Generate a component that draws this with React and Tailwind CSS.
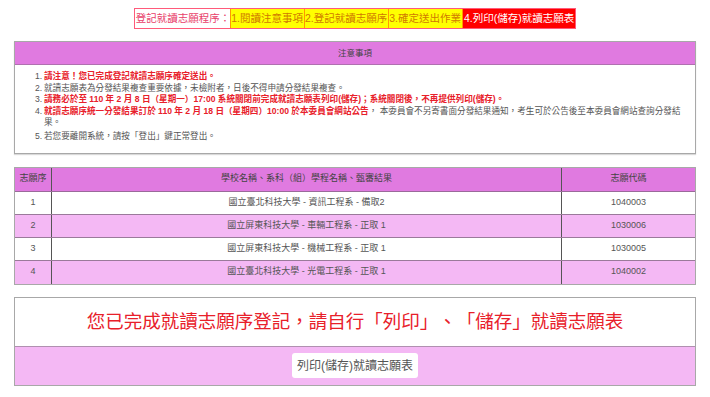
import React from "react";

const font = { fontFamily: '"Liberation Sans", "Noto Sans CJK TC", sans-serif' };

const rows = [
  ["1", "國立臺北科技大學 - 資訊工程系 - 備取2", "1040003"],
  ["2", "國立屏東科技大學 - 車輛工程系 - 正取 1", "1030006"],
  ["3", "國立屏東科技大學 - 機械工程系 - 正取 1", "1030005"],
  ["4", "國立臺北科技大學 - 光電工程系 - 正取 1", "1040002"],
];

export default function App() {
  return (
    <div lang="zh-TW" className="w-[710px] h-[397px] bg-white overflow-hidden text-[#555] [text-spacing-trim:space-all]" style={font}>
      <div className="flex justify-center pt-[8px]">
        <div className="flex border border-[#ff5a7a] text-[10.5px] leading-[19px]">
          <div className="bg-white text-[#e8406a] pl-[1px]">登記就讀志願程序：</div>
          <div className="bg-[#ffff00] text-[#d07a00] border-l border-[#ff9900] pr-[1px]">1.閱讀注意事項</div>
          <div className="bg-[#ffff00] text-[#d07a00] border-l border-[#ff9900] pr-[1px]">2.登記就讀志願序</div>
          <div className="bg-[#ffff00] text-[#d07a00] border-l border-[#ff9900] pr-[1px]">3.確定送出作業</div>
          <div className="bg-[#ff0000] text-white border-l border-[#ff9900] px-[1px]">4.列印(儲存)就讀志願表</div>
        </div>
      </div>

      <div className="mx-[14px] mt-[12px] border border-[#a8a8a8] shadow-[0_1px_1px_rgba(0,0,0,0.15)]">
        <div className="h-[23px] bg-[#e07ae0] border-b border-[#b070b0] flex items-center justify-center text-[8.5px] text-[#444]">
          注意事項
        </div>
        <div className="pl-[20px] pr-[10px] pt-[6px] pb-[10px] text-[8.6px] leading-[11.6px]">
          <div className="flex">
            <span className="w-[9px] shrink-0">1.</span>
            <span className="text-[#e8202a] font-bold">請注意！您已完成登記就讀志願序確定送出。</span>
          </div>
          <div className="flex">
            <span className="w-[9px] shrink-0">2.</span>
            <span>就讀志願表為分發結果複查重要依據，未檢附者，日後不得申請分發結果複查。</span>
          </div>
          <div className="flex">
            <span className="w-[9px] shrink-0">3.</span>
            <span className="text-[#e8202a] font-bold">請務必於至 110 年 2 月 8 日（星期一）17:00 系統關閉前完成就讀志願表列印(儲存)；系統關閉後，不再提供列印(儲存)。</span>
          </div>
          <div className="flex">
            <span className="w-[9px] shrink-0">4.</span>
            <span>
              <span className="text-[#e8202a] font-bold">就讀志願序統一分發結果訂於 110 年 2 月 18 日（星期四）10:00 於本委員會網站公告</span>
              ， 本委員會不另寄書面分發結果通知，考生可於公告後至本委員會網站查詢分發結果。
            </span>
          </div>
          <div className="flex mt-[2px]">
            <span className="w-[9px] shrink-0">5.</span>
            <span>若您要離開系統，請按「登出」鍵正常登出。</span>
          </div>
        </div>
      </div>

      <div className="mx-[14px] mt-[13px] border border-[#a8a8a8] text-[9px]">
        <div className="flex h-[24px] bg-[#e07ae0] text-[#444] border-b border-[#9a6a9a]">
          <div className="w-[37px] flex items-center justify-center border-r border-[#555]">志願序</div>
          <div className="flex-1 flex items-center justify-center border-r border-[#555]">學校名稱、系科（組）學程名稱、甄審結果</div>
          <div className="w-[133px] flex items-center justify-center">志願代碼</div>
        </div>
        {rows.map((r, i) => (
          <div
            key={r[0]}
            className={`flex h-[23px] ${i % 2 === 1 ? "bg-[#f4b8f4]" : "bg-white"} ${i < 3 ? "border-b border-[#9a7a9a]" : ""}`}
          >
            <div className="w-[37px] flex items-center justify-center border-r border-[#555]">{r[0]}</div>
            <div className="flex-1 flex items-center justify-center border-r border-[#555]">{r[1]}</div>
            <div className="w-[133px] flex items-center justify-center">{r[2]}</div>
          </div>
        ))}
      </div>

      <div className="mx-[14px] mt-[12px] border border-[#a8a8a8]">
        <div className="h-[49px] bg-white flex items-center justify-center text-[18.5px] text-[#e8202a] border-b border-[#b090b0]">
          您已完成就讀志願序登記，請自行「列印」、「儲存」就讀志願表
        </div>
        <div className="h-[38px] bg-[#f4b8f4] flex items-center justify-center">
          <button className="h-[25px] w-[126px] bg-white rounded-[3px] text-[12px] text-[#555]">
            列印(儲存)就讀志願表
          </button>
        </div>
      </div>
    </div>
  );
}
